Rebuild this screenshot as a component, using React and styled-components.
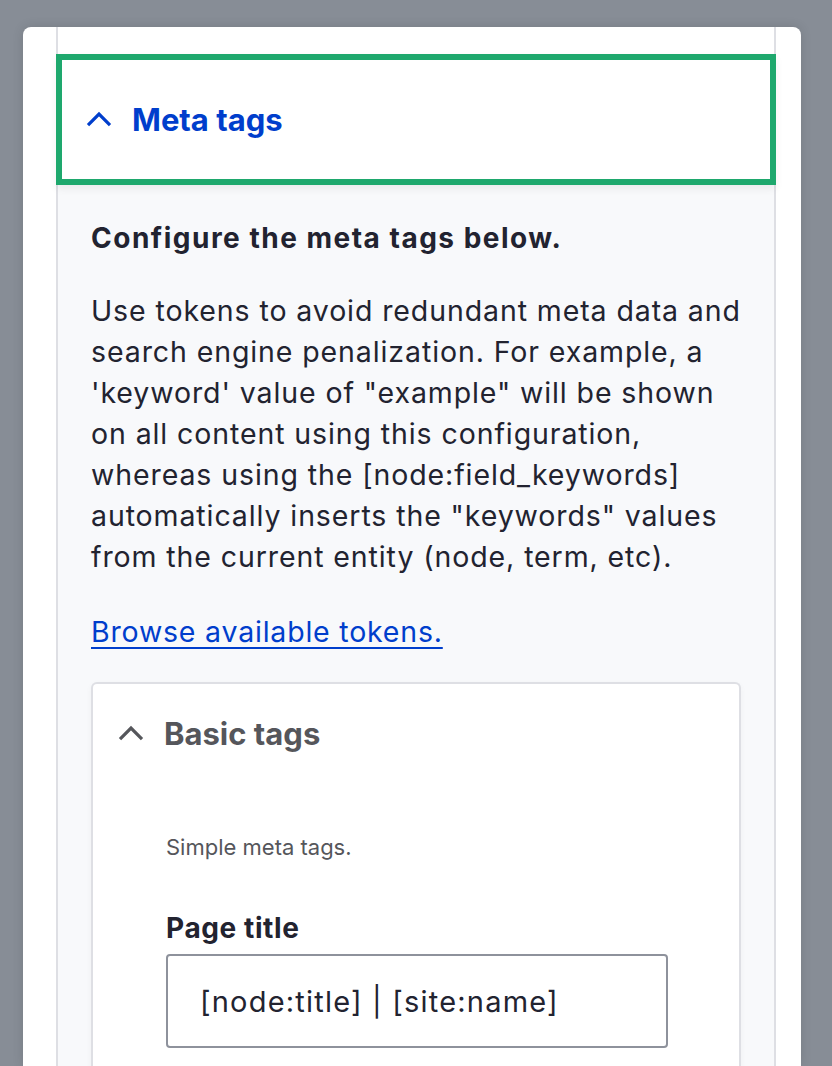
import React from "react";
import styled, { createGlobalStyle } from "styled-components";

const GlobalStyle = createGlobalStyle`
  html, body {
    margin: 0;
    padding: 0;
    background: #878d96;
    font-family: Inter, "Noto Sans", sans-serif;
    color: #222330;
  }
`;

const Page = styled.div`
  height: 1066px;
  overflow: hidden;
  padding: 27px 31px 0 23px;
  box-sizing: border-box;
`;

const Panel = styled.div`
  background: #ffffff;
  border-radius: 8px 8px 0 0;
  height: 100%;
  padding: 0 25px 0 33px;
  box-shadow: 0 0 12px rgba(0, 0, 0, 0.12);
`;

const Details = styled.div`
  border-left: 2px solid #dedfe4;
  border-right: 2px solid #dedfe4;
  height: 100%;
  padding-top: 27px;
  box-sizing: border-box;
  display: flex;
  flex-direction: column;
`;

const Summary = styled.div`
  flex-shrink: 0;
  height: 131px;
  margin: 0 -2px;
  box-sizing: border-box;
  border: 6px solid #1ea86d;
  background: #fff;
  display: flex;
  align-items: center;
  gap: 20px;
  padding-left: 24px;
  font-size: 31px;
  font-weight: 700;
  color: ${(p) => p.$color};
  position: relative;
  z-index: 1;
  box-shadow: 0 4px 8px rgba(0, 0, 0, 0.06);
`;

const Chevron = ({ color, size = 26 }) => (
  <svg width={size} height={size * 0.7} viewBox="0 0 26 18">
    <path d="M2 15 L13 4 L24 15" fill="none" stroke={color} strokeWidth="3.2" />
  </svg>
);

const Content = styled.div`
  flex: 1;
  background: #f8f9fb;
  padding: 33px 33px 0 33px;
`;

const Lead = styled.div`
  font-size: 28px;
  font-weight: 700;
  letter-spacing: 1.5px;
  line-height: 40px;
  margin-bottom: 32px;
`;

const Para = styled.p`
  margin: 0 0 34px 0;
  font-size: 28.5px;
  letter-spacing: 0.9px;
  line-height: 41px;
`;

const Link = styled.a`
  display: inline-block;
  font-size: 28.5px;
  letter-spacing: 0.8px;
  line-height: 41px;
  color: #003ecc;
  text-decoration: underline;
  text-decoration-thickness: 2px;
  text-underline-offset: 5px;
  margin-bottom: 30px;
`;

const Inner = styled.div`
  background: #ffffff;
  border: 2px solid #dedfe4;
  border-bottom: none;
  border-radius: 6px 6px 0 0;
  padding-left: 25px;
  height: 400px;
  box-shadow: 0 2px 6px rgba(0, 0, 0, 0.04);
`;

const InnerSummary = styled.div`
  display: flex;
  align-items: center;
  gap: 20px;
  height: 98px;
  font-size: 31px;
  font-weight: 700;
  color: #55565b;
`;

const InnerBody = styled.div`
  padding-left: 48px;
  padding-top: 49px;
`;

const Desc = styled.div`
  font-size: 22px;
  line-height: 32px;
  color: #55565b;
  margin-bottom: 47px;
`;

const Label = styled.div`
  font-size: 28px;
  font-weight: 700;
  letter-spacing: 0.6px;
  line-height: 36px;
  margin-bottom: 8px;
`;

const Input = styled.div`
  width: 502px;
  height: 94px;
  box-sizing: border-box;
  border: 2px solid #8e929c;
  border-radius: 4px;
  background: #fff;
  display: flex;
  align-items: center;
  padding-left: 32px;
  font-size: 29px;
  letter-spacing: 1.2px;
  color: #222330;
`;

export default function App() {
  return (
    <>
      <GlobalStyle />
      <Page>
        <Panel>
          <Details>
            <Summary $color="#003ecc">
              <Chevron color="#003ecc" />
              Meta tags
            </Summary>
            <Content>
              <Lead>Configure the meta tags below.</Lead>
              <Para>
                Use tokens to avoid redundant meta data and search engine
                penalization. For example, a 'keyword' value of "example" will
                be shown on all content using this configuration, whereas using
                the [node:field_keywords] automatically inserts the "keywords"
                values from the current entity (node, term, etc).
              </Para>
              <Link href="#">Browse available tokens.</Link>
              <Inner>
                <InnerSummary>
                  <Chevron color="#55565b" />
                  Basic tags
                </InnerSummary>
                <InnerBody>
                  <Desc>Simple meta tags.</Desc>
                  <Label>Page title</Label>
                  <Input>[node:title] | [site:name]</Input>
                </InnerBody>
              </Inner>
            </Content>
          </Details>
        </Panel>
      </Page>
    </>
  );
}
